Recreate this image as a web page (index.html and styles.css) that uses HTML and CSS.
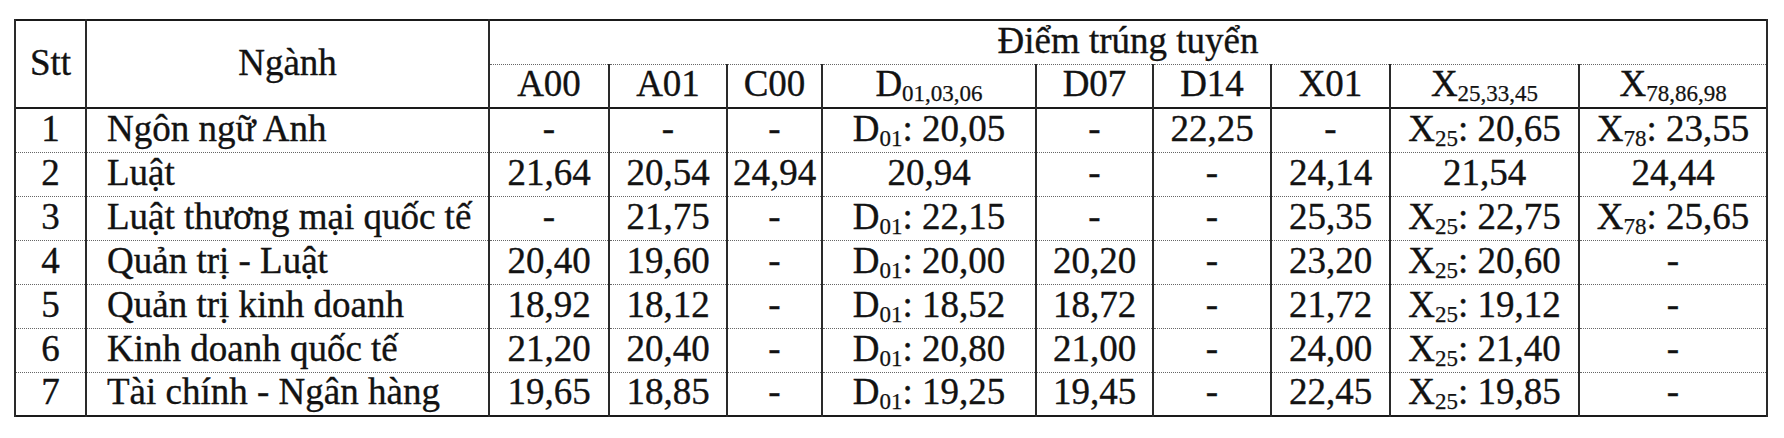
FILE: index.html
```html
<!DOCTYPE html>
<html lang="vi">
<head>
<meta charset="utf-8">
<title>Điểm trúng tuyển</title>
<link rel="stylesheet" href="styles.css">
</head>
<body>
<table class="scores">
  <colgroup>
    <col class="c-stt"><col class="c-name"><col class="c-a00"><col class="c-a01"><col class="c-c00"><col class="c-d"><col class="c-d07"><col class="c-d14"><col class="c-x01"><col class="c-x25"><col class="c-x78">
  </colgroup>
  <thead>
    <tr class="h1">
      <th rowspan="2">Stt</th>
      <th rowspan="2">Ngành</th>
      <th colspan="9" class="title">Điểm trúng tuyển</th>
    </tr>
    <tr class="h2">
      <th>A00</th><th>A01</th><th>C00</th>
      <th>D<sub class="s">01,03,06</sub></th>
      <th>D07</th><th>D14</th><th>X01</th>
      <th>X<sub class="s">25,33,45</sub></th>
      <th>X<sub class="s">78,86,98</sub></th>
    </tr>
  </thead>
  <tbody>
    <tr><td>1</td><td class="name">Ngôn ngữ Anh</td><td>-</td><td>-</td><td>-</td><td>D<sub class="s">01</sub>: 20,05</td><td>-</td><td>22,25</td><td>-</td><td>X<sub class="s">25</sub>: 20,65</td><td>X<sub class="s">78</sub>: 23,55</td></tr>
    <tr><td>2</td><td class="name">Luật</td><td>21,64</td><td>20,54</td><td>24,94</td><td>20,94</td><td>-</td><td>-</td><td>24,14</td><td>21,54</td><td>24,44</td></tr>
    <tr><td>3</td><td class="name">Luật thương mại quốc tế</td><td>-</td><td>21,75</td><td>-</td><td>D<sub class="s">01</sub>: 22,15</td><td>-</td><td>-</td><td>25,35</td><td>X<sub class="s">25</sub>: 22,75</td><td>X<sub class="s">78</sub>: 25,65</td></tr>
    <tr><td>4</td><td class="name">Quản trị - Luật</td><td>20,40</td><td>19,60</td><td>-</td><td>D<sub class="s">01</sub>: 20,00</td><td>20,20</td><td>-</td><td>23,20</td><td>X<sub class="s">25</sub>: 20,60</td><td>-</td></tr>
    <tr><td>5</td><td class="name">Quản trị kinh doanh</td><td>18,92</td><td>18,12</td><td>-</td><td>D<sub class="s">01</sub>: 18,52</td><td>18,72</td><td>-</td><td>21,72</td><td>X<sub class="s">25</sub>: 19,12</td><td>-</td></tr>
    <tr><td>6</td><td class="name">Kinh doanh quốc tế</td><td>21,20</td><td>20,40</td><td>-</td><td>D<sub class="s">01</sub>: 20,80</td><td>21,00</td><td>-</td><td>24,00</td><td>X<sub class="s">25</sub>: 21,40</td><td>-</td></tr>
    <tr><td>7</td><td class="name">Tài chính - Ngân hàng</td><td>19,65</td><td>18,85</td><td>-</td><td>D<sub class="s">01</sub>: 19,25</td><td>19,45</td><td>-</td><td>22,45</td><td>X<sub class="s">25</sub>: 19,85</td><td>-</td></tr>
  </tbody>
</table>
</body>
</html>
```
FILE: styles.css
```css
html, body {
  margin: 0;
  background: #ffffff;
}
body {
  padding: 19px 0 0 14px;
  font-family: "Liberation Serif", "Times New Roman", serif;
  color: #121212;
}
.scores {
  width: 1752px;
  table-layout: fixed;
  border-collapse: collapse;
  border: 2px solid #1a1a1a;
  font-family: "Liberation Serif", "Times New Roman", serif;
  font-size: 37px;
  line-height: 1;
  -webkit-text-stroke: 0.35px #121212;
}
.c-stt { width: 71px; }
.c-name { width: 403px; }
.c-a00 { width: 120px; }
.c-a01 { width: 118px; }
.c-c00 { width: 95px; }
.c-d { width: 214px; }
.c-d07 { width: 117px; }
.c-d14 { width: 118px; }
.c-x01 { width: 119px; }
.c-x25 { width: 189px; }
.c-x78 { width: 188px; }

.scores th,
.scores td {
  height: 44px;
  padding: 0 0 4px 0;
  box-sizing: border-box;
  text-align: center;
  vertical-align: middle;
  font-weight: normal;
  white-space: nowrap;
  border-left: 2px solid #2a2a2a;
  border-right: 2px solid #2a2a2a;
}
.scores tbody td {
  border-top: 1px dotted #666;
}
.scores tbody tr:first-child td {
  border-top: 2px solid #1a1a1a;
}
.h1 .title {
  border-bottom: 1px dotted #666;
}
.scores td.name {
  text-align: left;
  padding-left: 20px;
}
.s {
  font-size: 23px;
  line-height: 0;
  vertical-align: -5px;
  -webkit-text-stroke: 0.25px #121212;
}
```
